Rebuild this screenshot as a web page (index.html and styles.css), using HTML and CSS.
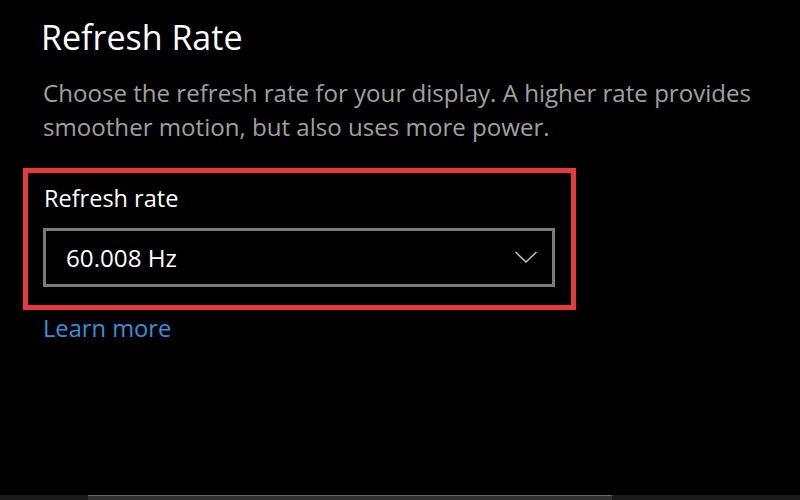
FILE: index.html
```html
<!DOCTYPE html>
<html>
<head>
<meta charset="utf-8">
<link rel="stylesheet" href="styles.css">
</head>
<body>
<div class="page">
  <main class="content">
    <h1 class="title">Refresh Rate</h1>
    <p class="desc">Choose the refresh rate for your display. A higher rate provides smoother motion, but also uses more power.</p>
    <div class="highlight">
      <div class="label">Refresh rate</div>
      <div class="select">
        <span class="value">60.008 Hz</span>
        <svg class="chevron" width="24" height="14" viewBox="0 0 24 14"><path d="M1.5 2 L12 12 L22.5 2" fill="none" stroke="#c4c4c4" stroke-width="1.5"/></svg>
      </div>
    </div>
    <a class="link">Learn more</a>
  </main>
  <footer class="taskbar"><div class="taskbar-thumb"></div></footer>
</div>
</body>
</html>
```
FILE: styles.css
```css
html, body { margin: 0; padding: 0; background: #000; }
.page {
  width: 800px;
  height: 500px;
  display: flex;
  flex-direction: column;
  font-family: "Open Sans", "Noto Sans", sans-serif;
  overflow: hidden;
}
.content {
  padding: 15px 0 0 43px;
  display: flex;
  flex-direction: column;
  align-items: flex-start;
}
.title {
  margin: 0 0 0 -2px;
  font-size: 34px;
  line-height: 44px;
  font-weight: 400;
  color: #fff;
}
.desc {
  margin: 17px 0 0 0;
  width: 750px;
  font-size: 24.1px;
  line-height: 34px;
  color: #a0a0a0;
}
.highlight {
  margin: 24px 0 0 -20px;
  width: 553px;
  box-sizing: border-box;
  border: 5px solid #e8393b;
  padding: 8px 16px 18px 15px;
  display: flex;
  flex-direction: column;
}
.label {
  font-size: 23.5px;
  line-height: 34px;
  color: #fff;
  margin-left: 1px;
}
.select {
  margin-top: 13px;
  width: 512px;
  height: 59px;
  box-sizing: border-box;
  border: 3px solid #7a7a7a;
  display: flex;
  align-items: center;
  justify-content: space-between;
  padding: 0 14px 0 20px;
}
.value {
  font-size: 24.2px;
  line-height: 34px;
  color: #fff;
}
.chevron { display: block; margin-top: -2px; }
.link {
  margin-top: 1px;
  font-size: 23.7px;
  line-height: 34px;
  color: #3a8fdc;
}
.taskbar {
  margin-top: auto;
  height: 5px;
  background: #1b1b1b;
  padding-left: 88px;
}
.taskbar-thumb {
  width: 524px;
  height: 5px;
  box-sizing: border-box;
  border-top: 1px solid #666;
  background: #323232;
}
```
